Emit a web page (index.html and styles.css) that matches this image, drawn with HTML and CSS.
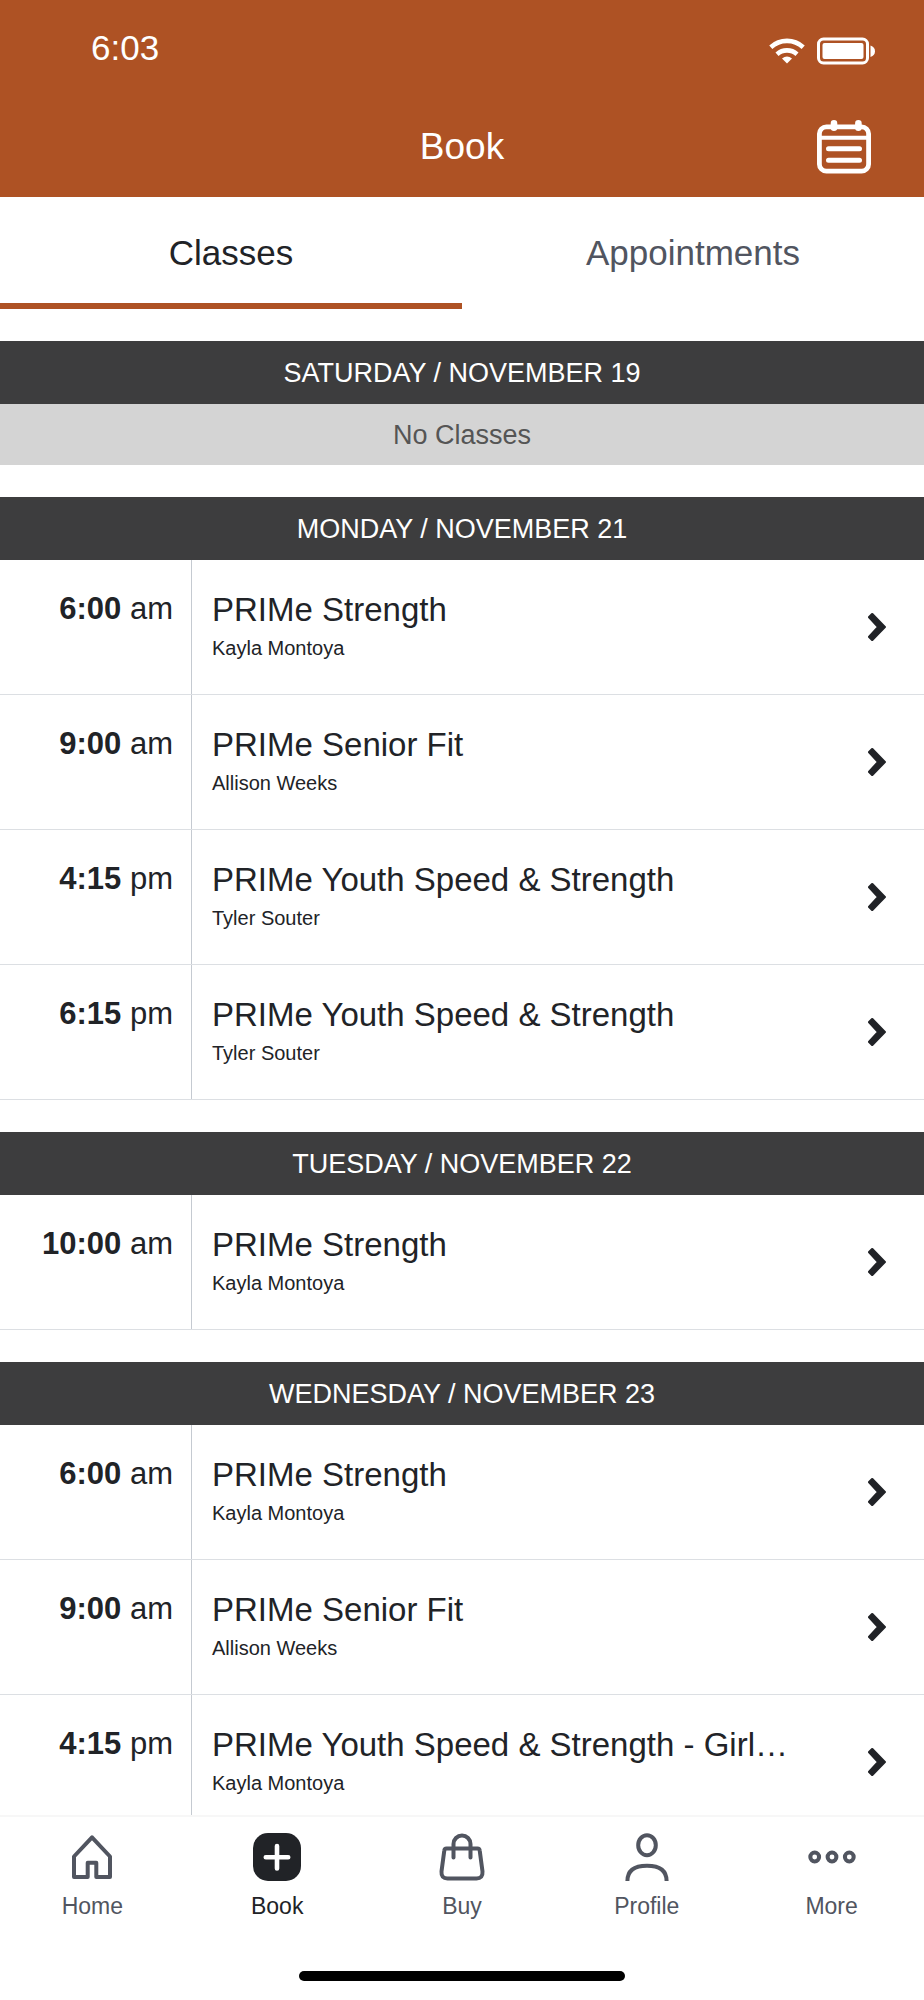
FILE: index.html
```html
<!DOCTYPE html>
<html lang="en">
<head>
<meta charset="utf-8">
<meta name="viewport" content="width=device-width, initial-scale=1">
<title>Book</title>
<link rel="stylesheet" href="styles.css">
</head>
<body>
<svg class="sprite" aria-hidden="true">
  <symbol id="chevron" viewBox="0 0 18 28"><path d="M4.2 1.2 16.8 14 4.2 26.8 1.2 23.8 10.2 14 1.2 4.2Z" fill="currentColor" stroke="currentColor" stroke-width="2.4" stroke-linejoin="round"/></symbol>
</svg>

<header class="header">
  <div class="status">
    <span class="status-time">6:03</span>
    <div class="status-icons">
      <svg width="36" height="26" viewBox="0 0 36 26" fill="none" stroke="#fff" stroke-width="4.6" aria-hidden="true">
        <path d="M1.8 9.2A24 24 0 0 1 34.2 9.2"/>
        <path d="M8 16.2A15 15 0 0 1 28 16.2"/>
        <path d="M18 25.4 13 20.6Q18 16.6 23 20.6Z" fill="#fff" stroke="none"/>
      </svg>
      <svg width="58" height="28" viewBox="0 0 58 28" aria-hidden="true">
        <rect x="1.5" y="2" width="49" height="24" rx="5" fill="none" stroke="#fff" stroke-width="3"/>
        <rect x="5.5" y="6" width="41" height="16" rx="2" fill="#fff"/>
        <path d="M53.5 8.5Q58 10 58 14.3T53.5 20Z" fill="#fff"/>
      </svg>
    </div>
  </div>
  <div class="titlebar">
    <h1 class="title">Book</h1>
    <button class="calendar" type="button" aria-label="Calendar">
      <svg width="54" height="54" viewBox="0 0 54 54" fill="none" stroke="#fff" aria-hidden="true">
        <rect x="2.4" y="6.8" width="49.2" height="44.4" rx="7" stroke-width="4.8"/>
        <path d="M3 17.8H51" stroke-width="4"/>
        <path d="M11.5 28.8H42.5M11.5 40.2H42.5" stroke-width="5" stroke-linecap="round"/>
        <path d="M17 3.4V7.8M41.4 3.4V7.8" stroke-width="6.6" stroke-linecap="round"/>
      </svg>
    </button>
  </div>
</header>

<nav class="tabs">
  <a class="tab tab-active" href="#classes">Classes</a>
  <a class="tab" href="#appointments">Appointments</a>
</nav>

<main class="schedule" id="classes">
  <section class="day">
    <h2 class="date">SATURDAY / NOVEMBER 19</h2>
    <p class="empty">No Classes</p>
  </section>

  <section class="day">
    <h2 class="date">MONDAY / NOVEMBER 21</h2>
    <a class="row" href="#c1"><span class="time"><b>6:00</b> am</span><span class="info"><span class="name">PRIMe Strength</span><span class="coach">Kayla Montoya</span></span><svg class="chevron"><use href="#chevron"/></svg></a>
    <a class="row" href="#c2"><span class="time"><b>9:00</b> am</span><span class="info"><span class="name">PRIMe Senior Fit</span><span class="coach">Allison Weeks</span></span><svg class="chevron"><use href="#chevron"/></svg></a>
    <a class="row" href="#c3"><span class="time"><b>4:15</b> pm</span><span class="info"><span class="name">PRIMe Youth Speed &amp; Strength</span><span class="coach">Tyler Souter</span></span><svg class="chevron"><use href="#chevron"/></svg></a>
    <a class="row" href="#c4"><span class="time"><b>6:15</b> pm</span><span class="info"><span class="name">PRIMe Youth Speed &amp; Strength</span><span class="coach">Tyler Souter</span></span><svg class="chevron"><use href="#chevron"/></svg></a>
  </section>

  <section class="day">
    <h2 class="date">TUESDAY / NOVEMBER 22</h2>
    <a class="row" href="#c5"><span class="time"><b>10:00</b> am</span><span class="info"><span class="name">PRIMe Strength</span><span class="coach">Kayla Montoya</span></span><svg class="chevron"><use href="#chevron"/></svg></a>
  </section>

  <section class="day">
    <h2 class="date">WEDNESDAY / NOVEMBER 23</h2>
    <a class="row" href="#c6"><span class="time"><b>6:00</b> am</span><span class="info"><span class="name">PRIMe Strength</span><span class="coach">Kayla Montoya</span></span><svg class="chevron"><use href="#chevron"/></svg></a>
    <a class="row" href="#c7"><span class="time"><b>9:00</b> am</span><span class="info"><span class="name">PRIMe Senior Fit</span><span class="coach">Allison Weeks</span></span><svg class="chevron"><use href="#chevron"/></svg></a>
    <a class="row" href="#c8"><span class="time"><b>4:15</b> pm</span><span class="info"><span class="name">PRIMe Youth Speed &amp; Strength - Girl…</span><span class="coach">Kayla Montoya</span></span><svg class="chevron"><use href="#chevron"/></svg></a>
  </section>
</main>

<footer class="bottom">
  <nav class="nav">
    <a class="nav-item" href="#home">
      <svg class="nav-icon" viewBox="0 0 48 48"><path d="M24 4.3 42 23.5V44H28.3V29.8H19.7V44H6V23.5Z"/></svg>
      <span>Home</span>
    </a>
    <a class="nav-item nav-current" href="#book">
      <svg class="nav-icon" viewBox="0 0 48 48"><rect width="48" height="48" rx="15" fill="#212327" stroke="none"/><path d="M24 13V35.5M12.8 24.2H35.2" stroke="#fff" stroke-width="4.6"/></svg>
      <span>Book</span>
    </a>
    <a class="nav-item" href="#buy">
      <svg class="nav-icon" viewBox="0 0 48 48"><path d="M8.5 15.5H39.5Q41.5 15.5 41.7 17.5L44.5 38.5Q45 45.6 38.5 45.6H9.5Q3 45.6 3.5 38.5L6.3 17.5Q6.5 15.5 8.5 15.5ZM15.5 24.5V11A8.5 8.5 0 0 1 32.5 11V24.5"/></svg>
      <span>Buy</span>
    </a>
    <a class="nav-item" href="#profile">
      <svg class="nav-icon" viewBox="0 0 48 48"><ellipse cx="24" cy="12.2" rx="8.8" ry="10"/><path stroke-linecap="butt" d="M4.4 48C4.4 36.6 12.4 32.7 24 32.7S43.6 36.6 43.6 48"/></svg>
      <span>Profile</span>
    </a>
    <a class="nav-item" href="#more">
      <svg class="nav-icon" viewBox="0 0 48 48"><circle cx="6.7" cy="24" r="4.4"/><circle cx="24" cy="24" r="4.4"/><circle cx="41.3" cy="24" r="4.4"/></svg>
      <span>More</span>
    </a>
  </nav>
  <div class="home-indicator"></div>
</footer>
</body>
</html>
```

FILE: styles.css
```css
* {
  box-sizing: border-box;
}

body {
  margin: 0;
  height: 100vh;
  display: flex;
  flex-direction: column;
  background: #fff;
  color: #212327;
  font-family: "Liberation Sans", Arial, sans-serif;
}

a {
  color: inherit;
  text-decoration: none;
}

.sprite {
  display: none;
}

/* Header */

.header {
  flex: none;
  background: #ae5224;
  color: #fff;
}

.status {
  display: flex;
  justify-content: space-between;
  align-items: center;
  padding: 28px 49px 0 91px;
}

.status-time {
  font-size: 35px;
  line-height: 40px;
}

.status-icons {
  display: flex;
  align-items: center;
  gap: 12px;
  padding-top: 5px;
}

.titlebar {
  display: grid;
  grid-template-columns: 1fr auto 1fr;
  align-items: center;
  padding: 52px 53px 23px;
}

.title {
  grid-column: 2;
  margin: 0;
  font-size: 37px;
  line-height: 42px;
  font-weight: 400;
}

.calendar {
  justify-self: end;
  display: flex;
  padding: 0;
  border: 0;
  background: none;
}

/* Tabs */

.tabs {
  flex: none;
  display: flex;
}

.tab {
  flex: 1;
  padding: 36px 0 30px;
  border-bottom: 6px solid transparent;
  color: #515560;
  font-size: 35px;
  line-height: 40px;
  text-align: center;
}

.tab-active {
  border-bottom-color: #ae5224;
  color: #212327;
}

/* Schedule */

.schedule {
  flex: 1;
  min-height: 0;
  overflow-y: auto;
  scrollbar-width: none;
}

.day {
  margin-top: 32px;
}

.date,
.empty {
  margin: 0;
  font-size: 27px;
  line-height: 31px;
  font-weight: 400;
  text-align: center;
}

.date {
  padding: 17px 0 15px;
  background: #3d3d3e;
  color: #fff;
}

.empty {
  padding: 16px 0 14px;
  background: #d4d4d4;
  color: #555;
}

.row {
  display: flex;
  align-items: center;
  height: 135px;
  padding-right: 38px;
  border-bottom: 1px solid #dcdfe3;
}

.time {
  flex: none;
  align-self: stretch;
  width: 192px;
  padding: 31px 18px 0 0;
  border-right: 1px solid #c5cad1;
  font-size: 31px;
  line-height: 36px;
  text-align: right;
}

.info {
  flex: 1;
  min-width: 0;
  align-self: stretch;
  display: flex;
  flex-direction: column;
  gap: 7px;
  padding: 31px 40px 0 20px;
}

.name {
  overflow: hidden;
  font-size: 33px;
  line-height: 38px;
  text-overflow: ellipsis;
  white-space: nowrap;
}

.coach {
  font-size: 20px;
  line-height: 24px;
}

.chevron {
  flex: none;
  width: 18px;
  height: 28px;
}

/* Bottom navigation */

.bottom {
  flex: none;
  padding-bottom: 19px;
  border-top: 2px solid #f7f7f7;
}

.nav {
  display: flex;
  padding-top: 16px;
}

.nav-item {
  flex: 1;
  display: flex;
  flex-direction: column;
  align-items: center;
  gap: 11px;
  color: #515560;
  font-size: 23px;
  line-height: 28px;
}

.nav-current {
  color: #212327;
}

.nav-icon {
  width: 48px;
  height: 48px;
  fill: none;
  stroke: currentColor;
  stroke-width: 4;
  stroke-linecap: round;
  stroke-linejoin: round;
}

.home-indicator {
  width: 326px;
  height: 10px;
  margin: 51px auto 0;
  border-radius: 5px;
  background: #000;
}
```
